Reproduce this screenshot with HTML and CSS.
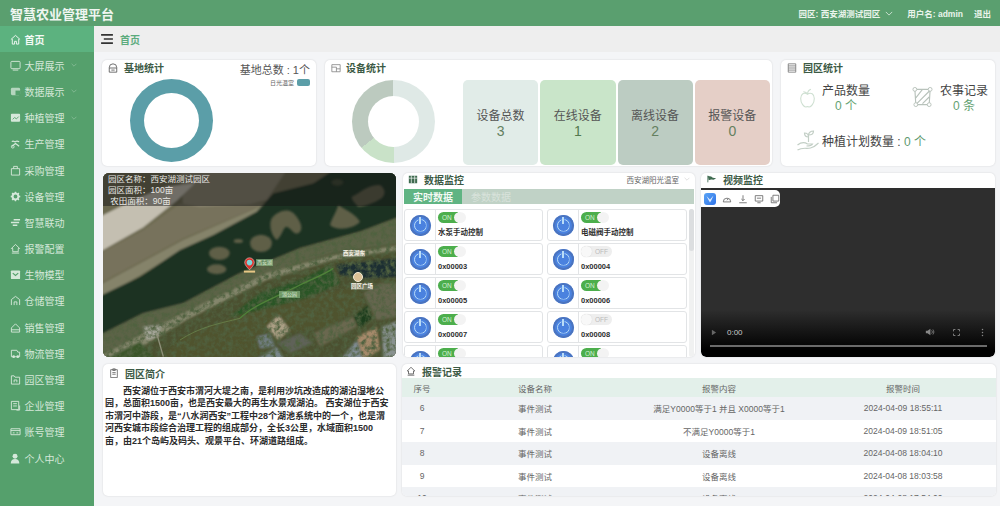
FILE: index.html
```html
<!DOCTYPE html>
<html lang="zh">
<head>
<meta charset="utf-8">
<title>智慧农业管理平台</title>
<link rel="stylesheet" href="styles.css">
</head>
<body>
<header class="topbar">
  <div class="brand">智慧农业管理平台</div>
  <div class="top-right">
    <span>园区: 西安湖测试园区</span>
    <svg class="chev" viewBox="0 0 10 6"><path d="M1 1l4 4 4-4" fill="none" stroke="#dfeee3" stroke-width="1"/></svg>
    <span class="user">用户名: admin</span>
    <span>退出</span>
  </div>
</header>
<div class="shell">
  <nav class="side">
    <a class="nav active"><svg class="ni" viewBox="0 0 12 12"><path d="M1 6l5-4.500L11 6M2.500 5.500V11h2.500V8h2v3h2.500V5.500" fill="none" stroke="currentColor"/></svg><b>首页</b></a>
    <a class="nav"><svg class="ni" viewBox="0 0 12 12"><rect x="1" y="1.500" width="10" height="8" rx="1" fill="none" stroke="currentColor"/><path d="M3 11h6" stroke="currentColor"/></svg>大屏展示<svg class="arrow" viewBox="0 0 10 6"><path d="M1 1l4 4 4-4" fill="none" stroke="currentColor"/></svg></a>
    <a class="nav"><svg class="ni" viewBox="0 0 12 12"><rect x="1" y="2" width="10" height="8" rx="1.500" fill="currentColor" opacity=".75"/><rect x="6" y="5" width="5" height="5" fill="#55a06c"/></svg>数据展示<svg class="arrow" viewBox="0 0 10 6"><path d="M1 1l4 4 4-4" fill="none" stroke="currentColor"/></svg></a>
    <a class="nav"><svg class="ni" viewBox="0 0 12 12"><rect x="1" y="2" width="10" height="8.500" rx="1" fill="currentColor"/><path d="M3 8l2-2 2 1.500L9.500 5" stroke="#55a06c" fill="none"/></svg>种植管理<svg class="arrow" viewBox="0 0 10 6"><path d="M1 1l4 4 4-4" fill="none" stroke="currentColor"/></svg></a>
    <a class="nav"><svg class="ni" viewBox="0 0 12 12"><path d="M2 9l4-3 4 3M2 4c2-2 3 1 4 0s2-1 4 0" fill="none" stroke="currentColor" stroke-width="1.300"/><circle cx="3" cy="9.500" r="1.500" fill="none" stroke="currentColor"/></svg>生产管理</a>
    <a class="nav"><svg class="ni" viewBox="0 0 12 12"><path d="M1.500 4h9v7h-9zM4 4V1.500h4V4" fill="none" stroke="currentColor"/></svg>采购管理</a>
    <a class="nav"><svg class="ni" viewBox="0 0 12 12"><circle cx="6" cy="6" r="3.200" fill="none" stroke="currentColor" stroke-width="2.200"/><path d="M6 .8v2M6 9.200v2M.8 6h2M9.200 6h2M2.300 2.300l1.400 1.400M8.300 8.300l1.400 1.400M9.700 2.300L8.300 3.700M3.700 8.300L2.300 9.700" stroke="currentColor" stroke-width="1.500"/></svg>设备管理</a>
    <a class="nav"><svg class="ni" viewBox="0 0 12 12"><path d="M4 3h7M1 6h9M3 9h5" stroke="currentColor" stroke-width="1.400"/></svg>智慧联动</a>
    <a class="nav"><svg class="ni" viewBox="0 0 12 12"><path d="M1.500 6L6 1.500 10.500 6H9v3.500H3V6zM2 11h8" fill="none" stroke="currentColor"/></svg>报警配置</a>
    <a class="nav"><svg class="ni" viewBox="0 0 12 12"><rect x="1" y="1.500" width="10" height="9.500" rx="1" fill="currentColor"/><path d="M3 4.500l3 2.500 3-2.500" stroke="#55a06c" stroke-width="1.300" fill="none"/></svg>生物模型</a>
    <a class="nav"><svg class="ni" viewBox="0 0 12 12"><path d="M1.500 11V5L6 1.500 10.500 5v6M4.500 11V7.500h3V11" fill="none" stroke="currentColor"/></svg>仓储管理</a>
    <a class="nav"><svg class="ni" viewBox="0 0 12 12"><path d="M1.500 11V6.500L6 2l4.500 4.500V11zM1.500 8.500h9" fill="none" stroke="currentColor"/></svg>销售管理</a>
    <a class="nav"><svg class="ni" viewBox="0 0 12 12"><path d="M1.500 2.500h6l1 2h2v5h-9z" fill="none" stroke="currentColor"/><circle cx="4" cy="9.500" r="1.500" fill="currentColor"/><circle cx="8.500" cy="9.500" r="1.500" fill="currentColor"/></svg>物流管理</a>
    <a class="nav"><svg class="ni" viewBox="0 0 12 12"><path d="M1.500 2h3l1 1.500h5V11h-9zM4.500 9V6.500h3V9" fill="none" stroke="currentColor"/></svg>园区管理</a>
    <a class="nav"><svg class="ni" viewBox="0 0 12 12"><path d="M1.500 1.500h8v9h-8zM3.500 4h4M3.500 6.500h4M10.500 6v5H7" fill="none" stroke="currentColor"/></svg>企业管理</a>
    <a class="nav"><svg class="ni" viewBox="0 0 12 12"><path d="M1 3h10v6.500H1zM1 5h10M3 7.500h2M7 7.500h2" fill="none" stroke="currentColor"/></svg>账号管理</a>
    <a class="nav"><svg class="ni" viewBox="0 0 12 12"><circle cx="5.500" cy="3.500" r="2.700" fill="currentColor"/><path d="M.8 11.500c0-3.500 2-5 4.700-5s4.700 1.500 4.700 5z" fill="currentColor"/></svg>个人中心</a>
  </nav>
  <main class="content">
    <div class="crumbs">
      <svg class="burger" viewBox="0 0 13 11"><path d="M0 1h13M3 5.500h10M0 10h13" stroke="#333" stroke-width="1.800"/></svg>
      <span>首页</span>
    </div>
    <div class="board">
      <section class="row row-stats">
        <div class="card base-card">
          <h3 class="title"><svg class="ti" viewBox="0 0 12 12"><path d="M1.500 11V5.500a4.500 4.500 0 0 1 9 0V11zM1.500 6h9M4 8.500h4" fill="none" stroke="#555" stroke-width="1"/></svg>基地统计</h3>
          <div class="base-total">基地总数 : 1个</div>
          <div class="legend"><span>日光温室</span><i></i></div>
          <div class="ring ring-base"></div>
        </div>
        <div class="card device-card">
          <h3 class="title"><svg class="ti" viewBox="0 0 12 12"><path d="M1 2h10v8.500H1zM1 5h5.500v5.500M6.500 7h4.500" fill="none" stroke="#888" stroke-width="1"/></svg>设备统计</h3>
          <div class="device-body">
            <div class="ring ring-device"></div>
            <div class="tiles">
              <div class="tile t1"><span>设备总数</span><em>3</em></div>
              <div class="tile t2"><span>在线设备</span><em>1</em></div>
              <div class="tile t3"><span>离线设备</span><em>2</em></div>
              <div class="tile t4"><span>报警设备</span><em>0</em></div>
            </div>
          </div>
        </div>
        <div class="card park-card">
          <h3 class="title"><svg class="ti" viewBox="0 0 12 12"><path d="M1.500 1h9v10h-9zM1.500 3.500h9M1.500 6h9M1.500 8.500h9" fill="none" stroke="#777" stroke-width="1"/></svg>园区统计</h3>
          <div class="park-grid">
            <div class="stat">
              <svg class="apple" viewBox="0 0 20 24"><path d="M10 7C6 4 2 7 2 12c0 6 4 10 6 10 1 0 1-.5 2-.5s1 .5 2 .5c2 0 6-4 6-10 0-5-4-8-8-5zM10 7c0-3 1-5 4-6M5 4c2 0 4 1 5 3" fill="none" stroke="#cfe0d2" stroke-width="1.300"/></svg>
              <div class="stat-text"><span>产品数量</span><em>0 个</em></div>
            </div>
            <div class="stat">
              <svg class="field" viewBox="0 0 22 22"><path d="M3 3h16l-1 16H4zM4 12L11 3M5 18L18 5M11 18l7-7" fill="none" stroke="#b8c2bb" stroke-width="1.200"/><circle cx="3" cy="3" r="2" fill="#fff" stroke="#b8c2bb"/><circle cx="19" cy="3" r="2" fill="#fff" stroke="#b8c2bb"/><circle cx="4" cy="19" r="2" fill="#fff" stroke="#b8c2bb"/><circle cx="18" cy="19" r="2" fill="#fff" stroke="#b8c2bb"/></svg>
              <div class="stat-text"><span>农事记录</span><em>0 条</em></div>
            </div>
            <div class="stat plan">
              <svg class="hand" viewBox="0 0 24 22"><path d="M1 16c4-3 7-3 10-1l5 0c-1 2-3 2-6 2M1 21c5-3 9-1 13-2s6-3 8-5M12 13V5M12 8C9 8 8 6 8 4c3 0 4 2 4 4zM12 6c0-2 2-4 5-4 0 3-2 4-5 4z" fill="none" stroke="#c3cfc6" stroke-width="1.200"/></svg>
              <span>种植计划数量 : <small>0 个</small></span>
            </div>
          </div>
        </div>
      </section>
      <section class="row row-mid">
        <div class="map">
          <svg class="map-art" viewBox="9 9 879 552" preserveAspectRatio="none">
            <defs>
              <filter id="soft"><feGaussianBlur stdDeviation="3"/></filter>
              <filter id="island"><feGaussianBlur stdDeviation="3.500"/></filter>
              <filter id="softer"><feGaussianBlur stdDeviation="1.500"/></filter>
              <filter id="grain" x="0" y="0" width="100%" height="100%">
                <feTurbulence type="fractalNoise" baseFrequency=".07" numOctaves="3" seed="4" result="n"/>
                <feColorMatrix in="n" type="matrix" values="0 0 0 0 .08  0 0 0 0 .12  0 0 0 0 .05  2.600 0 0 0 -1"/>
                <feComposite in2="SourceGraphic" operator="in"/>
              </filter>
            </defs>
            <rect x="9" y="9" width="879" height="552" fill="#4b5030"/>
            <g filter="url(#soft)">
              <polygon points="0,0 900,0 900,60 500,120 240,245 0,380" fill="#6c6950"/>
              <polygon points="240,0 560,0 500,90 300,140 250,110" fill="#8a8470"/>
              <polygon points="0,245 130,172 230,92 285,40 200,50 100,90 0,140" fill="#c4bfb1"/>
              <polygon points="0,250 130,180 240,100 300,110 500,100 250,205 0,340" fill="#77725c"/>
              <polygon points="0,345 250,210 490,105 510,118 245,240 120,318 0,385" fill="#85836a"/>
              <polygon points="0,378 120,320 240,240 340,195 470,125 520,70 640,40 700,0 900,0 900,140 780,185 600,235 420,310 250,400 130,430 0,495" fill="#1c3124"/>
              <polygon points="0,495 130,430 250,400 420,310 600,235 780,185 900,140 900,220 700,250 500,310 250,430 130,490 0,560" fill="#5c6346"/>
              <polygon points="0,560 130,490 250,430 500,310 700,255 900,225 900,240 700,270 500,330 260,450 60,570" fill="#84866c"/>
              <polygon points="710,285 800,275 900,265 900,320 800,325 720,315" fill="#1b2d33"/>
              <polygon points="390,440 480,370 600,330 690,285 720,340 610,390 520,420 410,450" fill="#2a5528"/>
              <polygon points="180,570 250,500 400,440 560,400 770,345 790,400 690,470 560,490 460,570" fill="#50522f"/>
              <polygon points="10,570 120,515 170,570" fill="#3a552b"/>
              <polygon points="500,470 535,435 570,480 535,510" fill="#ab9f85"/>
              <polygon points="470,500 510,490 525,530 480,535" fill="#6f7d80"/>
              <polygon points="465,570 530,530 555,570" fill="#78868a"/>
              <polygon points="530,520 600,490 640,520 570,550" fill="#5e6258"/>
              <polygon points="760,440 805,405 815,445 780,475" fill="#1f3d1c"/>
              <polygon points="810,400 845,385 850,420 825,430" fill="#7e97a6"/>
              <polygon points="770,500 830,470 840,540 790,570" fill="#a5896a"/>
              <polygon points="845,470 900,450 900,570 850,570" fill="#88918f"/>
              <polygon points="720,570 770,510 790,570" fill="#7e8a90"/>
              <polygon points="790,370 840,340 900,340 900,440 830,450" fill="#66664f"/>
              <polygon points="640,490 760,440 770,470 660,530" fill="#6a684f"/>
              <polygon points="130,470 185,465 175,500 140,510" fill="#a5a69a"/>
            </g>
            <polygon points="0,495 130,430 250,400 420,310 600,235 780,185 900,140 900,570 0,570" fill="#000" filter="url(#grain)"/>
            <g filter="url(#island)" fill="#5f5e47">
              <ellipse cx="358" cy="250" rx="31" ry="20"/>
              <ellipse cx="483" cy="220" rx="33" ry="26"/>
              <ellipse cx="350" cy="298" rx="29" ry="15"/>
              <ellipse cx="415" cy="213" rx="14" ry="6"/>
              <path d="M515 145c20-25 55-35 75-5 15 20 20 40 5 50-15 5-20-15-35-20-10 0-15 30-30 40-15-10-25-45-15-65z"/>
              <path d="M690 165c5-20 15-30 25-60 20 15 50 25 65 50-15 20-70 30-90 10z"/>
              <path d="M755 80c25-10 45-35 85-35 20 15 15 30 5 40-25 15-50 25-70 25-10-10-20-20-20-30z"/>
              <ellipse cx="712" cy="37" rx="18" ry="10" fill="#3e4630"/>
            </g>
            <g fill="none" filter="url(#softer)">
              <path d="M420 445c40-40 100-60 180-100 40-20 70-30 100-50" stroke="#4f8239" stroke-width="4"/>
              <path d="M240 510c60-40 120-50 180-65" stroke="#6f8c50" stroke-width="2"/>
              <path d="M170 490l20 70" stroke="#8f907a" stroke-width="4"/>
            </g>
          </svg>
          <div class="map-info"><div>园区名称：西安湖测试园区</div><div>园区面积：100亩</div><div>&nbsp;农田面积：90亩</div></div>
          <svg class="pin" viewBox="0 0 16 20"><path d="M8 1a6 6 0 0 1 6 6c0 3-3 6-6 9-3-3-6-6-6-9a6 6 0 0 1 6-6z" fill="#dc2f2a" stroke="#f3f0e8" stroke-width=".6"/><circle cx="8" cy="7" r="3.500" fill="#7fd4d8"/><rect x="1" y="17" width="14" height="2.500" fill="#e8c785"/></svg>
          <span class="chip chip-a">西安湖</span>
          <span class="chip chip-b">湖公园</span>
          <span class="map-label lab-a">西安湖东</span>
          <span class="map-dot"></span>
          <span class="map-label lab-b">园区广场</span>
        </div>
        <div class="card monitor">
          <div class="monitor-head">
            <h3 class="title"><svg class="ti" viewBox="0 0 12 12"><path d="M1 2h10v9H1z" fill="#3f6b50"/><path d="M4 2v9M8 2v9M1 5h10" stroke="#fff" stroke-width=".8"/></svg>数据监控</h3>
            <div class="picker">西安湖阳光温室<svg class="chev" viewBox="0 0 10 6"><path d="M1 1l4 4 4-4" fill="none" stroke="#ccc"/></svg></div>
          </div>
          <div class="tabs"><span class="tab on">实时数据</span><span class="tab">参数数据</span></div>
          <div class="devices">
            <div class="dev-grid">
              <div class="dev"><div class="pow"><i></i></div><div class="dev-r"><div class="sw on"><span>ON</span><i></i></div><p>水泵手动控制</p></div></div>
              <div class="dev"><div class="pow"><i></i></div><div class="dev-r"><div class="sw on"><span>ON</span><i></i></div><p>电磁阀手动控制</p></div></div>
              <div class="dev"><div class="pow"><i></i></div><div class="dev-r"><div class="sw on"><span>ON</span><i></i></div><p>0x00003</p></div></div>
              <div class="dev"><div class="pow"><i></i></div><div class="dev-r"><div class="sw off"><i></i><span>OFF</span></div><p>0x00004</p></div></div>
              <div class="dev"><div class="pow"><i></i></div><div class="dev-r"><div class="sw on"><span>ON</span><i></i></div><p>0x00005</p></div></div>
              <div class="dev"><div class="pow"><i></i></div><div class="dev-r"><div class="sw on"><span>ON</span><i></i></div><p>0x00006</p></div></div>
              <div class="dev"><div class="pow"><i></i></div><div class="dev-r"><div class="sw on"><span>ON</span><i></i></div><p>0x00007</p></div></div>
              <div class="dev"><div class="pow"><i></i></div><div class="dev-r"><div class="sw off"><i></i><span>OFF</span></div><p>0x00008</p></div></div>
              <div class="dev"><div class="pow"><i></i></div><div class="dev-r"><div class="sw on"><span>ON</span><i></i></div></div></div>
              <div class="dev"><div class="pow"><i></i></div><div class="dev-r"><div class="sw on"><span>ON</span><i></i></div></div></div>
            </div>
            <div class="scroll"><i></i></div>
          </div>
        </div>
        <div class="card video-card">
          <h3 class="title"><svg class="ti" viewBox="0 0 12 12"><path d="M1 2.500l4 .5 2 1.500 4 .5-3 2-3-.5-3 1z" fill="#3f6b50"/><path d="M1 2v8" stroke="#3f6b50"/></svg>视频监控</h3>
          <div class="video">
            <div class="tools">
              <span class="tool-main"><svg viewBox="0 0 12 12"><path d="M2.500 3l3.500 3.500L9.500 2.500 7.500 7l-1.500 2.500L4.500 7z" fill="#dcebff"/></svg></span>
              <svg viewBox="0 0 12 12"><path d="M1.500 9.500a4.500 4.500 0 1 1 9 0zM6 7.500l1.500-2" fill="none" stroke="#666"/></svg>
              <svg viewBox="0 0 12 12"><path d="M6 1.500V8M4 6l2 2 2-2M1.500 10.500h9" fill="none" stroke="#666"/></svg>
              <svg viewBox="0 0 12 12"><path d="M1.500 2h9v6.500h-9zM4 10.500h4M3.500 5h5" fill="none" stroke="#666"/></svg>
              <svg viewBox="0 0 12 12"><path d="M3.500 1.500h7v7h-7zM1.500 3.500v7h7" fill="none" stroke="#666"/></svg>
            </div>
            <div class="controls">
              <div class="ctl-row">
                <svg class="play" viewBox="0 0 8 10"><path d="M1 1l6 4-6 4z" fill="#666"/></svg>
                <span class="time">0:00</span>
                <svg class="vol" viewBox="0 0 12 12"><path d="M1 4.500h2L6.500 2v8L3 7.500H1z" fill="#888"/><path d="M8 4c1 1 1 3 0 4M9.500 3c1.500 1.500 1.500 4.500 0 6" fill="none" stroke="#888"/></svg>
                <svg class="full" viewBox="0 0 12 12"><path d="M2 4.500V2h2.500M7.500 2H10v2.500M10 7.500V10H7.500M4.500 10H2V7.500" fill="none" stroke="#888" stroke-width="1.200"/></svg>
                <svg class="more" viewBox="0 0 4 12"><circle cx="2" cy="2" r="1" fill="#888"/><circle cx="2" cy="6" r="1" fill="#888"/><circle cx="2" cy="10" r="1" fill="#888"/></svg>
              </div>
              <div class="progress"></div>
            </div>
          </div>
        </div>
      </section>
      <section class="row row-bottom">
        <div class="card intro">
          <h3 class="title"><svg class="ti" viewBox="0 0 12 12"><path d="M2 2h8v9.500H2zM4.500 1h3v2h-3zM4 5.500h4M4 7.500h4" fill="none" stroke="#666"/></svg>园区简介</h3>
          <p>西安湖位于西安市渭河大堤之南，是利用沙坑改造成的湖泊湿地公园，总面积1500亩，也是西安最大的再生水景观湖泊。 西安湖位于西安市渭河中游段，是“八水润西安”工程中28个湖池系统中的一个，也是渭河西安城市段综合治理工程的组成部分，全长3公里，水域面积1500<br>亩，由21个岛屿及码头、观景平台、环湖道路组成。</p>
        </div>
        <div class="card alarms">
          <h3 class="title"><svg class="ti" viewBox="0 0 12 12"><path d="M1.500 6L6 1.500 10.500 6H9v3.500H3V6zM2 11h8" fill="none" stroke="#555"/></svg>报警记录</h3>
          <div class="table">
            <div class="tr th"><span>序号</span><span>设备名称</span><span>报警内容</span><span>报警时间</span></div>
            <div class="tr odd"><span>6</span><span>事件测试</span><span>满足Y0000等于1 并且 X0000等于1</span><span>2024-04-09 18:55:11</span></div>
            <div class="tr"><span>7</span><span>事件测试</span><span>不满足Y0000等于1</span><span>2024-04-09 18:51:05</span></div>
            <div class="tr odd"><span>8</span><span>事件测试</span><span>设备离线</span><span>2024-04-08 18:04:10</span></div>
            <div class="tr"><span>9</span><span>事件测试</span><span>设备离线</span><span>2024-04-08 18:03:58</span></div>
            <div class="tr odd"><span>10</span><span>事件测试</span><span>设备离线</span><span>2024-04-08 17:54:00</span></div>
          </div>
        </div>
      </section>
    </div>
  </main>
</div>
</body>
</html>
```
FILE: styles.css
```css
* { box-sizing: border-box; }
html, body { margin: 0; height: 100%; overflow: hidden; }
body {
  font-family: "Liberation Sans", "Noto Sans CJK SC", sans-serif;
  background: #f4f5f7;
  color: #333;
  width: 1000px;
  height: 506px;
}
svg { display: block; flex: none; }
.topbar {
  height: 26px;
  background: #5a9f6f;
  color: #fff;
  display: flex;
  align-items: center;
  justify-content: space-between;
  padding: 0 9px 0 10px;
}
.brand { font-size: 13px; font-weight: 700; color: #f0f6f1; }
.top-right { display: flex; align-items: center; font-size: 8.500px; font-weight: 700; color: #eaf4ec; }
.top-right .chev { width: 8px; height: 5px; margin: 0 0 0 5px; }
.top-right .user { margin: 0 11px 0 14px; }
.shell { display: flex; height: 480px; }
.side {
  width: 94px;
  background: #55a06c;
  display: flex;
  flex-direction: column;
  flex: none;
}
.nav {
  height: 26.200px;
  display: flex;
  align-items: center;
  padding-left: 10px;
  color: #d5e8da;
  font-size: 10px;
  white-space: nowrap;
}
.nav.active { background: #5cb27f; color: #f4faf6; }
.nav.active b { font-weight: 700; }
.ni { width: 11px; height: 11px; margin-right: 3.500px; }
.arrow { width: 6px; height: 4px; margin-left: 6px; opacity: .55; }
.content { flex: 1; min-width: 0; display: flex; flex-direction: column; }
.crumbs {
  height: 26px;
  background: #eeeeee;
  display: flex;
  align-items: center;
  padding-left: 7px;
  font-size: 10px;
  font-weight: 700;
  color: #5cab7d;
  flex: none;
}
.burger { width: 12px; height: 10px; margin-right: 7px; }
.board {
  padding: 8px 4px 0 8px;
  display: flex;
  flex-direction: column;
  gap: 7px;
}
.row { display: flex; }
.row-stats { height: 106px; gap: 9px; }
.row-mid { height: 184px; gap: 6px; }
.row-bottom { height: 133px; gap: 6px; }
.card {
  background: #fff;
  border-radius: 5px;
  box-shadow: 0 0 2px rgba(0, 0, 0, .14);
  position: relative;
  overflow: hidden;
}
.title {
  margin: 0;
  display: flex;
  align-items: center;
  font-size: 10px;
  font-weight: 700;
  color: #3c5a45;
  height: 15px;
  padding-left: 6px;
}
.ti { width: 10px; height: 10px; margin-right: 6px; }
.base-card { width: 214px; }
.base-total { position: absolute; right: 6px; top: 1px; font-size: 11px; color: #555; }
.legend { position: absolute; right: 6px; top: 18px; display: flex; align-items: center; gap: 3px; font-size: 6px; color: #666; }
.legend i { width: 13px; height: 7px; border-radius: 2px; background: #5b9ea8; }
.ring { border-radius: 50%; position: relative; flex: none; }
.ring::after { content: ""; position: absolute; background: #fff; border-radius: 50%; }
.ring-base {
  width: 83px;
  height: 83px;
  margin: 4px 0 0 28px;
  background: #5b9ea8;
}
.ring-base::after { inset: 14px; }
.device-card { width: 447px; }
.device-card .ti { margin-right: 5px; }
.device-body { display: flex; padding-right: 2px; }
.ring-device {
  width: 83px;
  height: 83px;
  margin: 5px 0 0 27px;
  background: conic-gradient(#dfe9e6 0 50%, #c9e2c8 50% 64%, #bccabf 64% 100%);
}
.ring-device::after { inset: 16px; }
.tiles {
  display: flex;
  gap: 2px;
  margin-left: 28px;
  flex: 1;
  height: 85px;
  margin-top: 5px;
}
.tile {
  flex: 1;
  border-radius: 5px;
  display: flex;
  flex-direction: column;
  align-items: center;
  justify-content: center;
  font-size: 12px;
  line-height: 15px;
  color: #555;
  padding-top: 3px;
}
.tile em { font-style: normal; font-size: 14px; color: #53794f; }
.t1 { background: #e1ece8; }
.t2 { background: #c9e5c9; }
.t3 { background: #bcccc2; }
.t4 { background: #e5cfc7; }
.t3 em, .t1 em, .t4 em { color: #64805f; }
.park-card { width: 214px; }
.park-grid {
  display: grid;
  grid-template-columns: 113px 1fr;
  grid-template-rows: 46px 1fr;
  padding: 8px 0 0 18px;
}
.stat { display: flex; align-items: flex-start; font-size: 12px; color: #444; white-space: nowrap; }
.apple { width: 17px; height: 21px; margin: 5px 6px 0 0; }
.field { width: 21px; height: 22px; margin: 3px 7px 0 0; }
.stat-text { display: flex; flex-direction: column; align-items: center; line-height: 15px; padding-top: 1px; }
.stat-text em { font-style: normal; color: #64a272; font-size: 12px; }
.plan { grid-column: 1 / 3; align-items: center; margin-left: -3px; }
.hand { width: 25px; height: 22px; margin-right: 1px; }
.plan small { font-size: 12px; color: #5f9a6f; }
.map {
  width: 293px;
  height: 184px;
  border-radius: 6px;
  overflow: hidden;
  position: relative;
  flex: none;
  margin: 0 1px;
  background: #3a4634;
}
.map-art { width: 100%; height: 100%; }
.map-info {
  position: absolute;
  left: 0;
  top: 0;
  right: 0;
  height: 33px;
  background: rgba(20, 20, 20, .48);
  color: #e8e8e4;
  font-size: 8.500px;
  line-height: 11px;
  padding: 1px 5px;
}
.pin { position: absolute; left: 140px; top: 84px; width: 13px; height: 16px; }
.chip {
  position: absolute;
  background: rgba(136, 176, 128, .7);
  color: #d8e8d0;
  font-size: 5px;
  line-height: 7px;
  text-align: center;
  white-space: nowrap;
}
.chip-a { left: 153px; top: 86px; width: 17px; }
.chip-b { left: 176px; top: 118px; width: 21px; }
.map-label { position: absolute; color: #f4f0e4; font-size: 5.500px; font-weight: 700; line-height: 7px; background: rgba(255, 255, 255, .2); }
.lab-a { left: 240px; top: 77px; }
.lab-b { left: 248px; top: 110px; }
.map-dot { position: absolute; left: 250px; top: 99px; width: 10px; height: 10px; border-radius: 50%; background: #dcc196; border: 1px solid #f4ecd8; }
.monitor { width: 292px; }
.monitor-head { display: flex; justify-content: space-between; height: 16px; }
.monitor-head .title { padding-left: 5px; height: 12px; }
.picker { display: flex; align-items: center; font-size: 7.500px; color: #666; padding-right: 5px; height: 12px; }
.picker .chev { width: 6px; height: 4px; margin-left: 5px; }
.tabs { display: flex; height: 15px; background: #c0d2c6; margin: 0 1px; }
.tab { width: 58px; display: flex; align-items: center; justify-content: center; font-size: 10px; color: #d8e2db; }
.tab.on { background: #60b483; color: #f2f9f4; font-weight: 700; }
.devices { display: flex; padding: 5px 1px 0 1px; height: 153px; overflow: hidden; }
.dev-grid {
  display: grid;
  grid-template-columns: 139px 140px;
  grid-auto-rows: 32px;
  column-gap: 4px;
  row-gap: 2px;
  width: 286px;
}
.dev {
  border: 1px solid #e2e4e6;
  border-radius: 3px;
  display: flex;
  background: #fff;
}
.pow {
  width: 31px;
  flex: none;
  border-right: 1px solid #e2e4e6;
  display: flex;
  align-items: center;
  justify-content: center;
}
.pow i {
  width: 21px;
  height: 21px;
  border-radius: 50%;
  background: #4a82df;
  box-shadow: inset 0 0 0 2px #4b74bf;
  position: relative;
  display: block;
}
.pow i::before {
  content: "";
  position: absolute;
  inset: 4px;
  border-radius: 50%;
  border: 1.500px solid #b9dcf7;
  clip-path: polygon(0 0, 38% 0, 38% 50%, 62% 50%, 62% 0, 100% 0, 100% 100%, 0 100%);
}
.pow i::after {
  content: "";
  position: absolute;
  left: 9.750px;
  top: 2px;
  width: 1.500px;
  height: 7px;
  background: #b9dcf7;
}
.dev-r { padding: 2px 0 0 2px; min-width: 0; }
.dev-r p {
  margin: 5px 0 0;
  font-size: 7.500px;
  font-weight: 700;
  color: #2e2e2e;
  line-height: 10px;
  white-space: nowrap;
}
.sw {
  width: 31px;
  height: 11px;
  border-radius: 6px;
  display: flex;
  align-items: center;
  font-size: 6.500px;
  line-height: 11px;
  position: relative;
}
.sw span { padding: 0 0 0 4px; }
.sw.on { width: 20px; background: #4cae4c; color: #d5efd5; border-radius: 6px 0 0 6px; }
.sw.on i {
  position: absolute;
  left: 20px;
  top: 0;
  width: 12px;
  height: 11px;
  border-radius: 50%;
  background: #f3f3f3;
  margin-left: -4px;
}
.sw.off { background: #eeeeee; color: #bbb; }
.sw.off i { width: 11px; height: 11px; border-radius: 50%; background: #f8f8f8; box-shadow: 0 0 1px #ccc; flex: none; }
.sw.off span { padding-left: 3px; }
.scroll { width: 5px; height: 148px; background: #f0f1f1; border-radius: 3px; position: relative; margin-left: 1px; }
.scroll i { display: block; position: absolute; left: 0; top: 0; width: 5px; height: 42px; background: #dcdee0; border-radius: 3px; }
.video-card { width: 294px; display: flex; flex-direction: column; }
.video-card .title { height: 15px; padding: 0 0 3px 6px; flex: none; }
.video {
  flex: 1;
  position: relative;
  background: linear-gradient(#2e2e2e 0, #2e2e2e 72%, #000 96%);
  border-radius: 0 0 5px 5px;
}
.tools {
  position: absolute;
  left: 0;
  top: 2px;
  height: 17px;
  width: 79px;
  background: #fff;
  border-radius: 0 5px 5px 0;
  display: flex;
  align-items: center;
  gap: 6px;
  padding-left: 3px;
}
.tools > svg { width: 10px; height: 10px; }
.tool-main { width: 12px; height: 12px; border-radius: 3px; background: linear-gradient(135deg, #5aa4f5, #2f73e8); display: block; }
.tool-main svg { width: 12px; height: 12px; }
.controls { position: absolute; left: 0; right: 0; bottom: 0; padding: 0 8px 10px 10px; }
.ctl-row { display: flex; align-items: center; height: 12px; }
.play { width: 6px; height: 7px; }
.time { font-size: 8px; color: #c8c8c8; margin-left: 10px; flex: 1; }
.vol { width: 10px; height: 10px; margin-right: 17px; }
.full { width: 9px; height: 9px; margin-right: 20px; }
.more { width: 3px; height: 9px; margin-right: 3px; }
.progress { height: 2px; background: #6a6a6a; margin-top: 7px; margin-left: -1px; }
.intro { width: 293px; margin-left: 1px; height: 132px; }
.intro .title { height: 14px; margin-top: 2px; }
.intro p {
  margin: 4.500px 0 0;
  padding: 0 4px 0 2px;
  font-size: 9px;
  font-weight: 700;
  line-height: 12.500px;
  color: #2c2c2c;
  text-indent: 2em;
}
.alarms { flex: 1; height: 132px; }
.alarms .title { height: 14px; padding-left: 4px; }
.tr {
  display: grid;
  grid-template-columns: 40px 186px 182px 1fr;
  height: 22.500px;
  align-items: center;
  font-size: 8.500px;
  color: #666;
  text-align: center;
  white-space: nowrap;
}
.th { background: #e3f0ea; height: 19px; }
.odd { background: #f0f2f5; }
```
